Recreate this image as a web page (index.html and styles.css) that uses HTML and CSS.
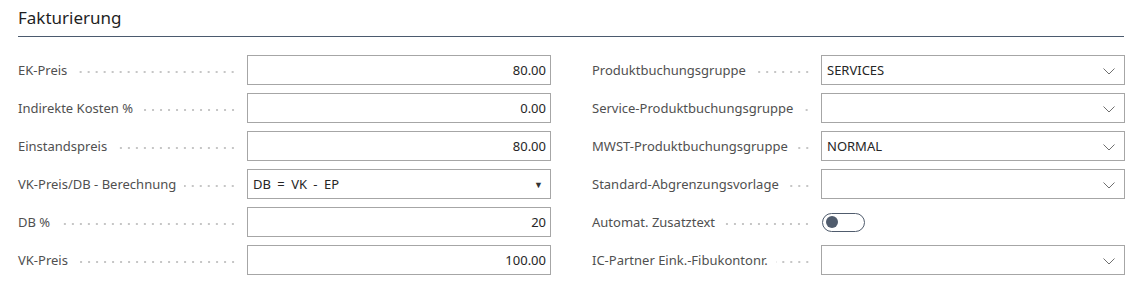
FILE: index.html
```html
<!DOCTYPE html>
<html lang="de">
<head>
  <meta charset="UTF-8" />
  <title>Fakturierung</title>
  <link rel="stylesheet" href="styles.css">
</head>
<body>
  <section class="group">
    <h2 class="group-title">Fakturierung</h2>

    <div class="columns">
      <div class="column">
        <div class="field">
          <label class="caption"><span>EK-Preis</span><i class="leader"></i></label>
          <div class="box num">80.00</div>
        </div>
        <div class="field">
          <label class="caption"><span>Indirekte Kosten %</span><i class="leader"></i></label>
          <div class="box num">0.00</div>
        </div>
        <div class="field">
          <label class="caption"><span>Einstandspreis</span><i class="leader"></i></label>
          <div class="box num">80.00</div>
        </div>
        <div class="field">
          <label class="caption"><span>VK-Preis/DB - Berechnung</span><i class="leader"></i></label>
          <div class="box option"><span class="opt-text">DB = VK - EP</span><span class="tri">&#9660;</span></div>
        </div>
        <div class="field">
          <label class="caption"><span>DB %</span><i class="leader"></i></label>
          <div class="box num">20</div>
        </div>
        <div class="field">
          <label class="caption"><span>VK-Preis</span><i class="leader"></i></label>
          <div class="box num">100.00</div>
        </div>
      </div>

      <div class="column">
        <div class="field">
          <label class="caption"><span>Produktbuchungsgruppe</span><i class="leader"></i></label>
          <div class="box lookup">SERVICES <svg class="chev" viewBox="0 0 12 7"><path d="M0.5 0.5 L6 6 L11.5 0.5" /></svg></div>
        </div>
        <div class="field">
          <label class="caption"><span>Service-Produktbuchungsgruppe</span><i class="leader"></i></label>
          <div class="box lookup"><svg class="chev" viewBox="0 0 12 7"><path d="M0.5 0.5 L6 6 L11.5 0.5" /></svg></div>
        </div>
        <div class="field">
          <label class="caption"><span>MWST-Produktbuchungsgruppe</span><i class="leader"></i></label>
          <div class="box lookup">NORMAL <svg class="chev" viewBox="0 0 12 7"><path d="M0.5 0.5 L6 6 L11.5 0.5" /></svg></div>
        </div>
        <div class="field">
          <label class="caption"><span>Standard-Abgrenzungsvorlage</span><i class="leader"></i></label>
          <div class="box lookup"><svg class="chev" viewBox="0 0 12 7"><path d="M0.5 0.5 L6 6 L11.5 0.5" /></svg></div>
        </div>
        <div class="field">
          <label class="caption"><span>Automat. Zusatztext</span><i class="leader"></i></label>
          <div class="toggle-cell"><span class="toggle"><span class="knob"></span></span></div>
        </div>
        <div class="field">
          <label class="caption"><span>IC-Partner Eink.-Fibukontonr.</span><i class="leader"></i></label>
          <div class="box lookup"><svg class="chev" viewBox="0 0 12 7"><path d="M0.5 0.5 L6 6 L11.5 0.5" /></svg></div>
        </div>
      </div>
    </div>
  </section>
</body>
</html>
```

FILE: styles.css
```css
* {
  box-sizing: border-box;
  margin: 0;
  padding: 0;
}

body {
  font-family: 'Noto Sans', 'Open Sans', sans-serif;
  background: #ffffff;
  color: #212121;
  padding: 0 11px 0 18px;
}

.group-title {
  font-size: 17px;
  font-weight: 400;
  color: #1f1f1f;
  line-height: 22px;
  padding-top: 7px;
  padding-bottom: 7px;
  border-bottom: 1px solid #4b5a6e;
  margin-bottom: 18px;
}

.columns {
  display: grid;
  grid-template-columns: 533px 533px;
  gap: 41px;
}

.column {
  display: flex;
  flex-direction: column;
  gap: 8px;
}

.field {
  display: grid;
  grid-template-columns: 229px 304px;
  height: 30px;
  align-items: center;
}

.caption {
  display: flex;
  align-items: center;
  font-size: 13px;
  color: #505050;
  padding-right: 10px;
  white-space: nowrap;
}

.leader {
  flex: 1;
  height: 2px;
  margin-left: 8px;
  margin-top: 4px;
  background-image: radial-gradient(circle, #c6c6c6 0.8px, transparent 1px);
  background-size: 8px 2px;
  background-repeat: repeat-x;
  background-position: right center;
}

.box {
  height: 30px;
  border: 1px solid #a6a6a6;
  font-size: 13px;
  color: #262626;
  display: flex;
  align-items: center;
  padding: 0 4px 0 5px;
}

.num {
  justify-content: flex-end;
}

.option {
  justify-content: space-between;
  padding-right: 7px;
}

.opt-text {
  word-spacing: 3px;
}

.tri {
  font-size: 9px;
  color: #333;
}

.lookup {
  position: relative;
}

.chev {
  position: absolute;
  right: 9px;
  top: 12px;
  width: 12px;
  height: 7px;
  fill: none;
  stroke: #6f6f6f;
  stroke-width: 1;
}

.toggle-cell {
  display: flex;
  align-items: center;
}

.toggle {
  width: 43px;
  height: 19px;
  border: 1px solid #505c6d;
  border-radius: 10px;
  display: flex;
  align-items: center;
  padding-left: 3px;
  margin-left: 1px;
}

.knob {
  width: 12px;
  height: 12px;
  border-radius: 50%;
  background: #505c6d;
}
```
